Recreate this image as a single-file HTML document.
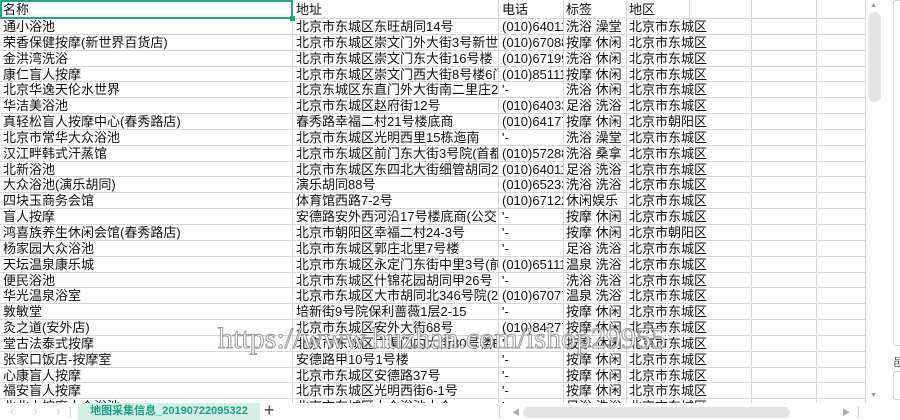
<!DOCTYPE html>
<html><head><meta charset="utf-8">
<style>
*{margin:0;padding:0;box-sizing:border-box}
body{width:900px;height:420px;overflow:hidden;background:#fff;font-family:"Liberation Sans","Noto Sans CJK SC","WenQuanYi Zen Hei",sans-serif;font-size:13px;color:#111;position:relative}
#grid{position:absolute;left:0;top:0;width:866px;height:403px;overflow:hidden}
.r{height:15.85px;border-bottom:1px solid #d6d6d6;position:relative;white-space:nowrap}
.r:first-child{height:19px}
.c{position:absolute;top:0;bottom:0;overflow:hidden;padding-left:3px;line-height:15px;border-right:1px solid #d6d6d6}
.r:first-child .c{line-height:19px}
.a{left:0;width:293px}.b{left:293px;width:206px}.cc{left:499px;width:65px}.d{left:564px;width:63px;padding-left:2px}.e{left:627px;width:63px;padding-left:2px}.f{left:690px;width:62px}.g{left:752px;width:65px}.h{left:817px;width:49px}
.r+.r .e{overflow:visible;border-right:none;z-index:2}
#sel{position:absolute;left:0;top:0;width:293px;height:19px;border:2px solid #1ea784}
#sel:after{content:"";position:absolute;right:-4px;bottom:-4px;width:5px;height:5px;background:#1ea784}
#wm{position:absolute;left:218px;top:322px;font-family:"Liberation Serif",serif;font-size:30px;color:#fff;-webkit-text-stroke:1px #9a9a9a;white-space:nowrap;z-index:5}
#vs{position:absolute;left:866px;top:0;width:16px;height:403px;background:#fff}
#vt{position:absolute;left:868px;top:12px;width:13px;height:90px;border-radius:7px;background:#e4e4e4}
#panel{position:absolute;left:893px;top:0;width:10px;height:346px;border:1px solid #d0d0d0;border-radius:3px}
#bot{position:absolute;left:0;top:403px;width:900px;height:17px;background:#fff}
#tab{position:absolute;left:78px;top:403px;width:182px;height:17px;background:#d3f0e7;color:#1a9e80;font-size:11px;text-align:center;line-height:17px;font-weight:bold}
#hs{position:absolute;left:523px;top:407px;width:267px;height:11px;border-radius:6px;background:#e4e4e4}
</style></head><body>
<div id="grid">
<div class="r"><div class="c a">名称</div><div class="c b">地址</div><div class="c cc">电话</div><div class="c d">标签</div><div class="c e">地区</div><div class="c f"></div><div class="c g"></div><div class="c h"></div></div>
<div class="r"><div class="c a">通小浴池</div><div class="c b">北京市东城区东旺胡同14号</div><div class="c cc">(010)64011</div><div class="c d">洗浴 澡堂</div><div class="c e">北京市东城区</div><div class="c f"></div><div class="c g"></div><div class="c h"></div></div>
<div class="r"><div class="c a">荣香保健按摩(新世界百货店)</div><div class="c b">北京市东城区崇文门外大街3号新世界</div><div class="c cc">(010)67088</div><div class="c d">按摩 休闲</div><div class="c e">北京市东城区</div><div class="c f"></div><div class="c g"></div><div class="c h"></div></div>
<div class="r"><div class="c a">金洪湾洗浴</div><div class="c b">北京市东城区崇文门东大街16号楼</div><div class="c cc">(010)67199</div><div class="c d">洗浴 休闲</div><div class="c e">北京市东城区</div><div class="c f"></div><div class="c g"></div><div class="c h"></div></div>
<div class="r"><div class="c a">康仁盲人按摩</div><div class="c b">北京市东城区崇文门西大街8号楼6门</div><div class="c cc">(010)85111</div><div class="c d">按摩 休闲</div><div class="c e">北京市东城区</div><div class="c f"></div><div class="c g"></div><div class="c h"></div></div>
<div class="r"><div class="c a">北京华逸天伦水世界</div><div class="c b">北京东城区东直门外大街南二里庄2</div><div class="c cc">'-</div><div class="c d">洗浴 休闲</div><div class="c e">北京市东城区</div><div class="c f"></div><div class="c g"></div><div class="c h"></div></div>
<div class="r"><div class="c a">华洁美浴池</div><div class="c b">北京市东城区赵府街12号</div><div class="c cc">(010)64033</div><div class="c d">足浴 洗浴</div><div class="c e">北京市东城区</div><div class="c f"></div><div class="c g"></div><div class="c h"></div></div>
<div class="r"><div class="c a">真轻松盲人按摩中心(春秀路店)</div><div class="c b">春秀路幸福二村21号楼底商</div><div class="c cc">(010)64177</div><div class="c d">按摩 休闲</div><div class="c e">北京市朝阳区</div><div class="c f"></div><div class="c g"></div><div class="c h"></div></div>
<div class="r"><div class="c a">北京市常华大众浴池</div><div class="c b">北京市东城区光明西里15栋迤南</div><div class="c cc">'-</div><div class="c d">洗浴 澡堂</div><div class="c e">北京市东城区</div><div class="c f"></div><div class="c g"></div><div class="c h"></div></div>
<div class="r"><div class="c a">汉江畔韩式汗蒸馆</div><div class="c b">北京市东城区前门东大街3号院(首都</div><div class="c cc">(010)57288</div><div class="c d">洗浴 桑拿</div><div class="c e">北京市东城区</div><div class="c f"></div><div class="c g"></div><div class="c h"></div></div>
<div class="r"><div class="c a">北新浴池</div><div class="c b">北京市东城区东四北大街细管胡同2</div><div class="c cc">(010)64011</div><div class="c d">足浴 洗浴</div><div class="c e">北京市东城区</div><div class="c f"></div><div class="c g"></div><div class="c h"></div></div>
<div class="r"><div class="c a">大众浴池(演乐胡同)</div><div class="c b">演乐胡同88号</div><div class="c cc">(010)65233</div><div class="c d">洗浴 洗浴</div><div class="c e">北京市东城区</div><div class="c f"></div><div class="c g"></div><div class="c h"></div></div>
<div class="r"><div class="c a">四块玉商务会馆</div><div class="c b">体育馆西路7-2号</div><div class="c cc">(010)67122</div><div class="c d">休闲娱乐</div><div class="c e">北京市东城区</div><div class="c f"></div><div class="c g"></div><div class="c h"></div></div>
<div class="r"><div class="c a">盲人按摩</div><div class="c b">安德路安外西河沿17号楼底商(公交</div><div class="c cc">'-</div><div class="c d">按摩 休闲</div><div class="c e">北京市东城区</div><div class="c f"></div><div class="c g"></div><div class="c h"></div></div>
<div class="r"><div class="c a">鸿喜族养生休闲会馆(春秀路店)</div><div class="c b">北京市朝阳区幸福二村24-3号</div><div class="c cc">'-</div><div class="c d">按摩 休闲</div><div class="c e">北京市朝阳区</div><div class="c f"></div><div class="c g"></div><div class="c h"></div></div>
<div class="r"><div class="c a">杨家园大众浴池</div><div class="c b">北京市东城区郭庄北里7号楼</div><div class="c cc">'-</div><div class="c d">足浴 洗浴</div><div class="c e">北京市东城区</div><div class="c f"></div><div class="c g"></div><div class="c h"></div></div>
<div class="r"><div class="c a">天坛温泉康乐城</div><div class="c b">北京市东城区永定门东街中里3号(前</div><div class="c cc">(010)65111</div><div class="c d">温泉 洗浴</div><div class="c e">北京市东城区</div><div class="c f"></div><div class="c g"></div><div class="c h"></div></div>
<div class="r"><div class="c a">便民浴池</div><div class="c b">北京市东城区什锦花园胡同甲26号</div><div class="c cc">'-</div><div class="c d">洗浴 洗浴</div><div class="c e">北京市东城区</div><div class="c f"></div><div class="c g"></div><div class="c h"></div></div>
<div class="r"><div class="c a">华光温泉浴室</div><div class="c b">北京市东城区大市胡同北346号院(2</div><div class="c cc">(010)67077</div><div class="c d">温泉 洗浴</div><div class="c e">北京市东城区</div><div class="c f"></div><div class="c g"></div><div class="c h"></div></div>
<div class="r"><div class="c a">敦敏堂</div><div class="c b">培新街9号院保利蔷薇1层2-15</div><div class="c cc">'-</div><div class="c d">按摩 休闲</div><div class="c e">北京市东城区</div><div class="c f"></div><div class="c g"></div><div class="c h"></div></div>
<div class="r"><div class="c a">灸之道(安外店)</div><div class="c b">北京市东城区安外大街68号</div><div class="c cc">(010)84277</div><div class="c d">按摩 休闲</div><div class="c e">北京市东城区</div><div class="c f"></div><div class="c g"></div><div class="c h"></div></div>
<div class="r"><div class="c a">堂古法泰式按摩</div><div class="c b">北京市东城区广渠门内大街80号楼B</div><div class="c cc">'-</div><div class="c d">按摩 休闲</div><div class="c e">北京市东城区</div><div class="c f"></div><div class="c g"></div><div class="c h"></div></div>
<div class="r"><div class="c a">张家口饭店-按摩室</div><div class="c b">安德路甲10号1号楼</div><div class="c cc">'-</div><div class="c d">按摩 休闲</div><div class="c e">北京市东城区</div><div class="c f"></div><div class="c g"></div><div class="c h"></div></div>
<div class="r"><div class="c a">心康盲人按摩</div><div class="c b">北京市东城区安德路37号</div><div class="c cc">'-</div><div class="c d">按摩 休闲</div><div class="c e">北京市东城区</div><div class="c f"></div><div class="c g"></div><div class="c h"></div></div>
<div class="r"><div class="c a">福安盲人按摩</div><div class="c b">北京市东城区光明西街6-1号</div><div class="c cc">'-</div><div class="c d">按摩 休闲</div><div class="c e">北京市东城区</div><div class="c f"></div><div class="c g"></div><div class="c h"></div></div>
<div class="r"><div class="c a">北北小按摩大众浴池</div><div class="c b">北京市东城区大众浴池大众</div><div class="c cc">'-</div><div class="c d">足浴 洗浴</div><div class="c e">北京市东城区</div><div class="c f"></div><div class="c g"></div><div class="c h"></div></div>
</div>
<div id="sel"></div>
<div id="wm">https://www.huzhan.com/ishop29955</div>
<div id="vs"></div><div id="vt"></div>
<div style="position:absolute;left:870px;top:2px;font-size:7px;color:#999">▲</div>
<div style="position:absolute;left:870px;top:392px;font-size:7px;color:#999">▼</div>
<div id="panel"></div>
<div style="position:absolute;left:893px;top:354px;font-size:11px;color:#555">邑</div>
<div style="position:absolute;left:893px;top:371px;width:10px;height:29px;border:1px solid #d0d0d0;border-radius:3px"></div>
<div id="bot"></div>
<div style="position:absolute;left:10px;top:403px;font-size:12px;color:#ccc;line-height:17px;letter-spacing:8px">‹ › ›|</div>
<div id="tab">地图采集信息_20190722095322</div>
<div style="position:absolute;left:264px;top:400px;font-size:18px;color:#444;line-height:20px">+</div>
<div style="position:absolute;left:499px;top:407px;width:1px;height:11px;background:#ccc"></div>
<div style="position:absolute;left:512px;top:407px;font-size:8px;color:#aaa">◀</div>
<div id="hs"></div>
<div style="position:absolute;left:842px;top:407px;font-size:8px;color:#aaa">▶</div>
<div style="position:absolute;left:858px;top:407px;width:1px;height:11px;background:#ccc"></div>
</body></html>
